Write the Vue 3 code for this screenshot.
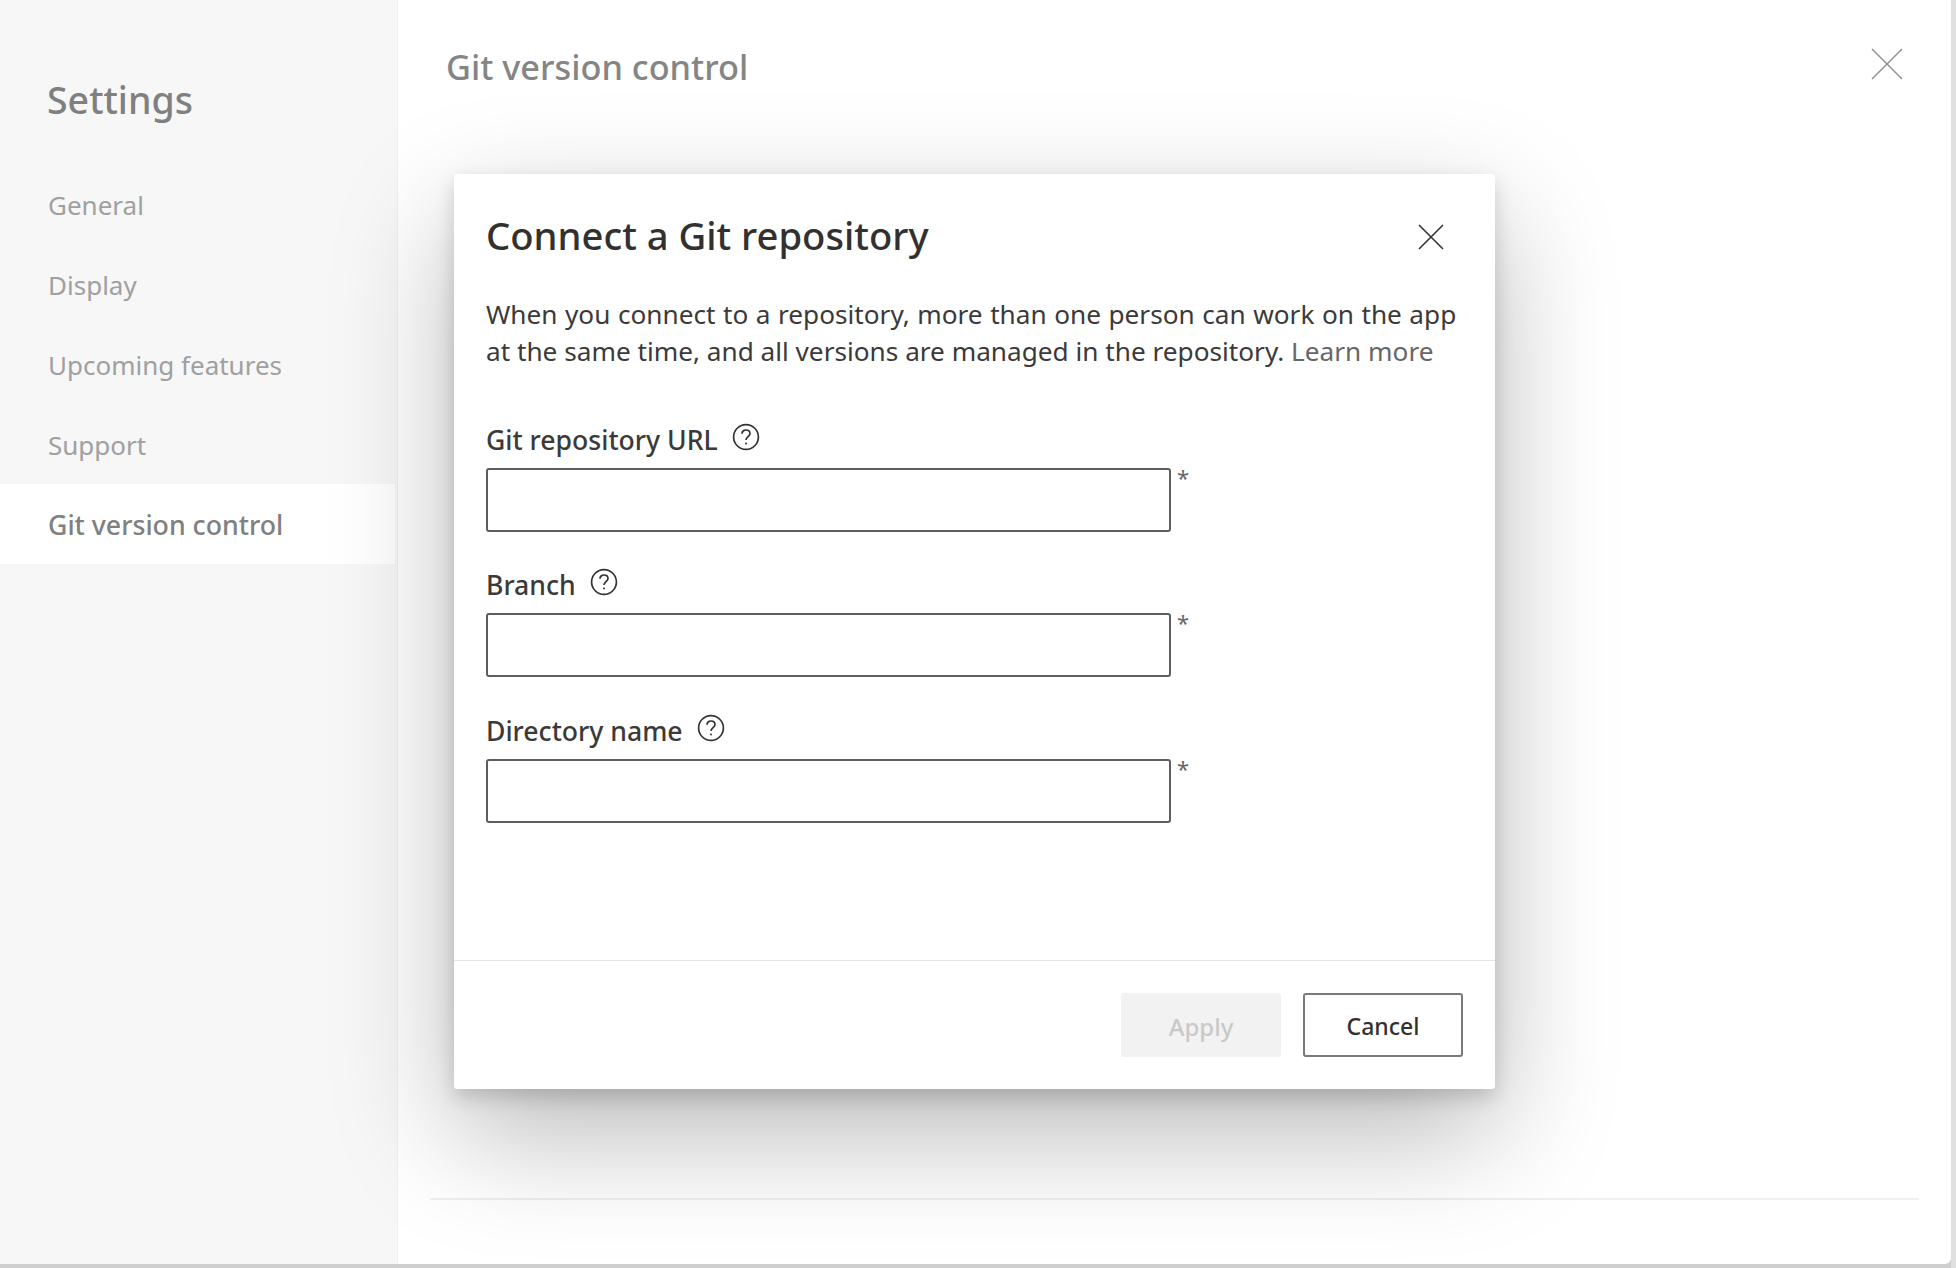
<script setup>
const navItems = [
  { label: 'General', active: false },
  { label: 'Display', active: false },
  { label: 'Upcoming features', active: false },
  { label: 'Support', active: false },
  { label: 'Git version control', active: true },
]
const fields = ['Git repository URL', 'Branch', 'Directory name']
</script>

<template>
  <div class="page">
    <div class="panel">
      <aside class="sidebar">
        <h1 class="side-title">Settings</h1>
        <nav class="nav">
          <div v-for="item in navItems" :key="item.label" class="nav-item" :class="{ active: item.active }">{{ item.label }}</div>
        </nav>
      </aside>
      <main class="main">
        <header class="main-head">
          <h2 class="main-title">Git version control</h2>
          <svg class="main-close" width="32" height="32" viewBox="0 0 32 32" fill="none" stroke="#8c8c8c" stroke-width="1.4"><path d="M1 1 31 31M31 1 1 31" /></svg>
        </header>
        <div class="main-spacer"></div>
        <div class="main-rule"></div>
      </main>
    </div>

    <section class="dialog">
      <div class="dialog-body">
        <div class="dialog-head">
          <h3 class="dialog-title">Connect a Git repository</h3>
          <svg class="dialog-close" width="26" height="26" viewBox="0 0 26 26" fill="none" stroke="#333" stroke-width="1.6"><path d="M1 1 25 25M25 1 1 25" /></svg>
        </div>
        <p class="desc"><span class="desc-first">When you connect to a repository, more than one person can work on the app</span> at the same time, and all versions are managed in the repository. <a class="link">Learn more</a></p>
        <div class="form">
          <div v-for="f in fields" :key="f" class="field">
            <div class="label-row">
              <label class="label">{{ f }}</label>
              <svg class="help" width="28" height="28" viewBox="0 0 28 28" fill="none" stroke="#333" stroke-width="1.7">
                <circle cx="14" cy="14" r="12.4" />
                <path d="M10 10.8c0-2.4 1.8-3.8 4-3.8s4 1.4 4 3.5c0 3.2-4 3.2-4 6.6" />
                <circle cx="14" cy="20.6" r="1" fill="#333" stroke="none" />
              </svg>
            </div>
            <div class="input-row">
              <input class="input" type="text" />
              <span class="req">*</span>
            </div>
          </div>
        </div>
      </div>
      <footer class="dialog-foot">
        <button class="btn btn-disabled" type="button">Apply</button>
        <button class="btn btn-cancel" type="button">Cancel</button>
      </footer>
    </section>
  </div>
</template>

<style scoped>
.page {
  position: relative;
  width: 1956px;
  height: 1268px;
  overflow: hidden;
  box-sizing: border-box;
  padding: 0 5px 4px 0;
  background: linear-gradient(#e0e0e0, #e0e0e0) right top / 5px 100% no-repeat, #cfcfcf;
  font-family: "Noto Sans", "Open Sans", sans-serif;
}
.panel {
  display: flex;
  height: 100%;
  background: #fff;
  border-bottom-right-radius: 6px;
  overflow: hidden;
}
.sidebar {
  width: 397px;
  flex: none;
  background: #f7f7f7;
  border-right: 1px solid #efefef;
}
.side-title {
  margin: 0;
  padding: 73px 0 38px 47px;
  font-size: 37.5px;
  line-height: 53px;
  font-weight: 500;
  color: #808080;
}
.nav { display: flex; flex-direction: column; }
.nav-item {
  height: 80px;
  line-height: 82px;
  padding-left: 48px;
  font-size: 26px;
  color: #a0a0a0;
}
.nav-item.active {
  background: #fff;
  margin-right: 2px;
  color: #808080;
  font-size: 26.7px;
  font-weight: 500;
}
.main {
  flex: 1;
  display: flex;
  flex-direction: column;
  padding: 0 32px 64px 32px;
}
.main-head {
  display: flex;
  justify-content: space-between;
  padding-top: 43px;
  height: 65px;
}
.main-title {
  margin: 0 0 0 16px;
  font-size: 34.3px;
  line-height: 48px;
  font-weight: 500;
  color: #858585;
}
.main-close { margin: 5px 16px 0 0; }
.main-spacer { flex: 1; }
.main-rule { height: 2px; background: #f0f0f0; }

.dialog {
  position: absolute;
  left: 454px;
  top: 174px;
  width: 1041px;
  height: 915px;
  display: flex;
  flex-direction: column;
  background: #fff;
  border-radius: 3px;
  box-shadow: 0 8px 20px rgba(0, 0, 0, 0.16), 0 45px 120px rgba(0, 0, 0, 0.28);
}
.dialog-body { flex: 1; padding: 0 32px; }
.dialog-head {
  display: flex;
  justify-content: space-between;
  align-items: center;
  height: 122px;
}
.dialog-title {
  margin: 0;
  font-size: 38.2px;
  line-height: 50px;
  font-weight: 500;
  color: #323130;
}
.dialog-close { margin: 4px 19px 0 0; flex: none; }
.desc {
  margin: 0;
  width: 985px;
  font-size: 26.2px;
  line-height: 37px;
  color: #3b3a39;
}
.desc-first { word-spacing: 0.7px; }
.link { color: #666; }
.form {
  display: flex;
  flex-direction: column;
  gap: 27.5px;
  margin-top: 43.75px;
}
.label-row {
  display: flex;
  align-items: center;
  gap: 14px;
  height: 54px;
}
.label {
  font-size: 26.6px;
  font-weight: 500;
  color: #3b3a39;
  line-height: 36px;
  position: relative;
  top: -1px;
}
.help { position: relative; top: -4px; }
.input-row { display: flex; align-items: flex-start; }
.input {
  width: 685px;
  height: 64px;
  box-sizing: border-box;
  border: 2px solid #605e5c;
  border-radius: 3px;
  background: #fff;
  padding: 0 10px;
  outline: none;
}
.req {
  margin-left: 6px;
  font-size: 22px;
  line-height: 22px;
  color: #666;
  position: relative;
  top: -2px;
}
.dialog-foot {
  height: 129px;
  flex: none;
  box-sizing: border-box;
  border-top: 1px solid #e4e4e4;
  display: flex;
  justify-content: flex-end;
  gap: 22px;
  padding: 32px 32px 0 0;
}
.btn {
  height: 64px;
  border-radius: 3px;
  font-family: inherit;
  font-weight: 500;
  padding: 2px 0 0;
}
.btn-disabled {
  width: 160px;
  background: #f2f2f2;
  border: none;
  color: #c9c9c9;
  font-size: 24px;
}
.btn-cancel {
  width: 160px;
  background: #fff;
  border: 2px solid #7a7a7a;
  color: #323130;
  font-size: 23px;
}
</style>
